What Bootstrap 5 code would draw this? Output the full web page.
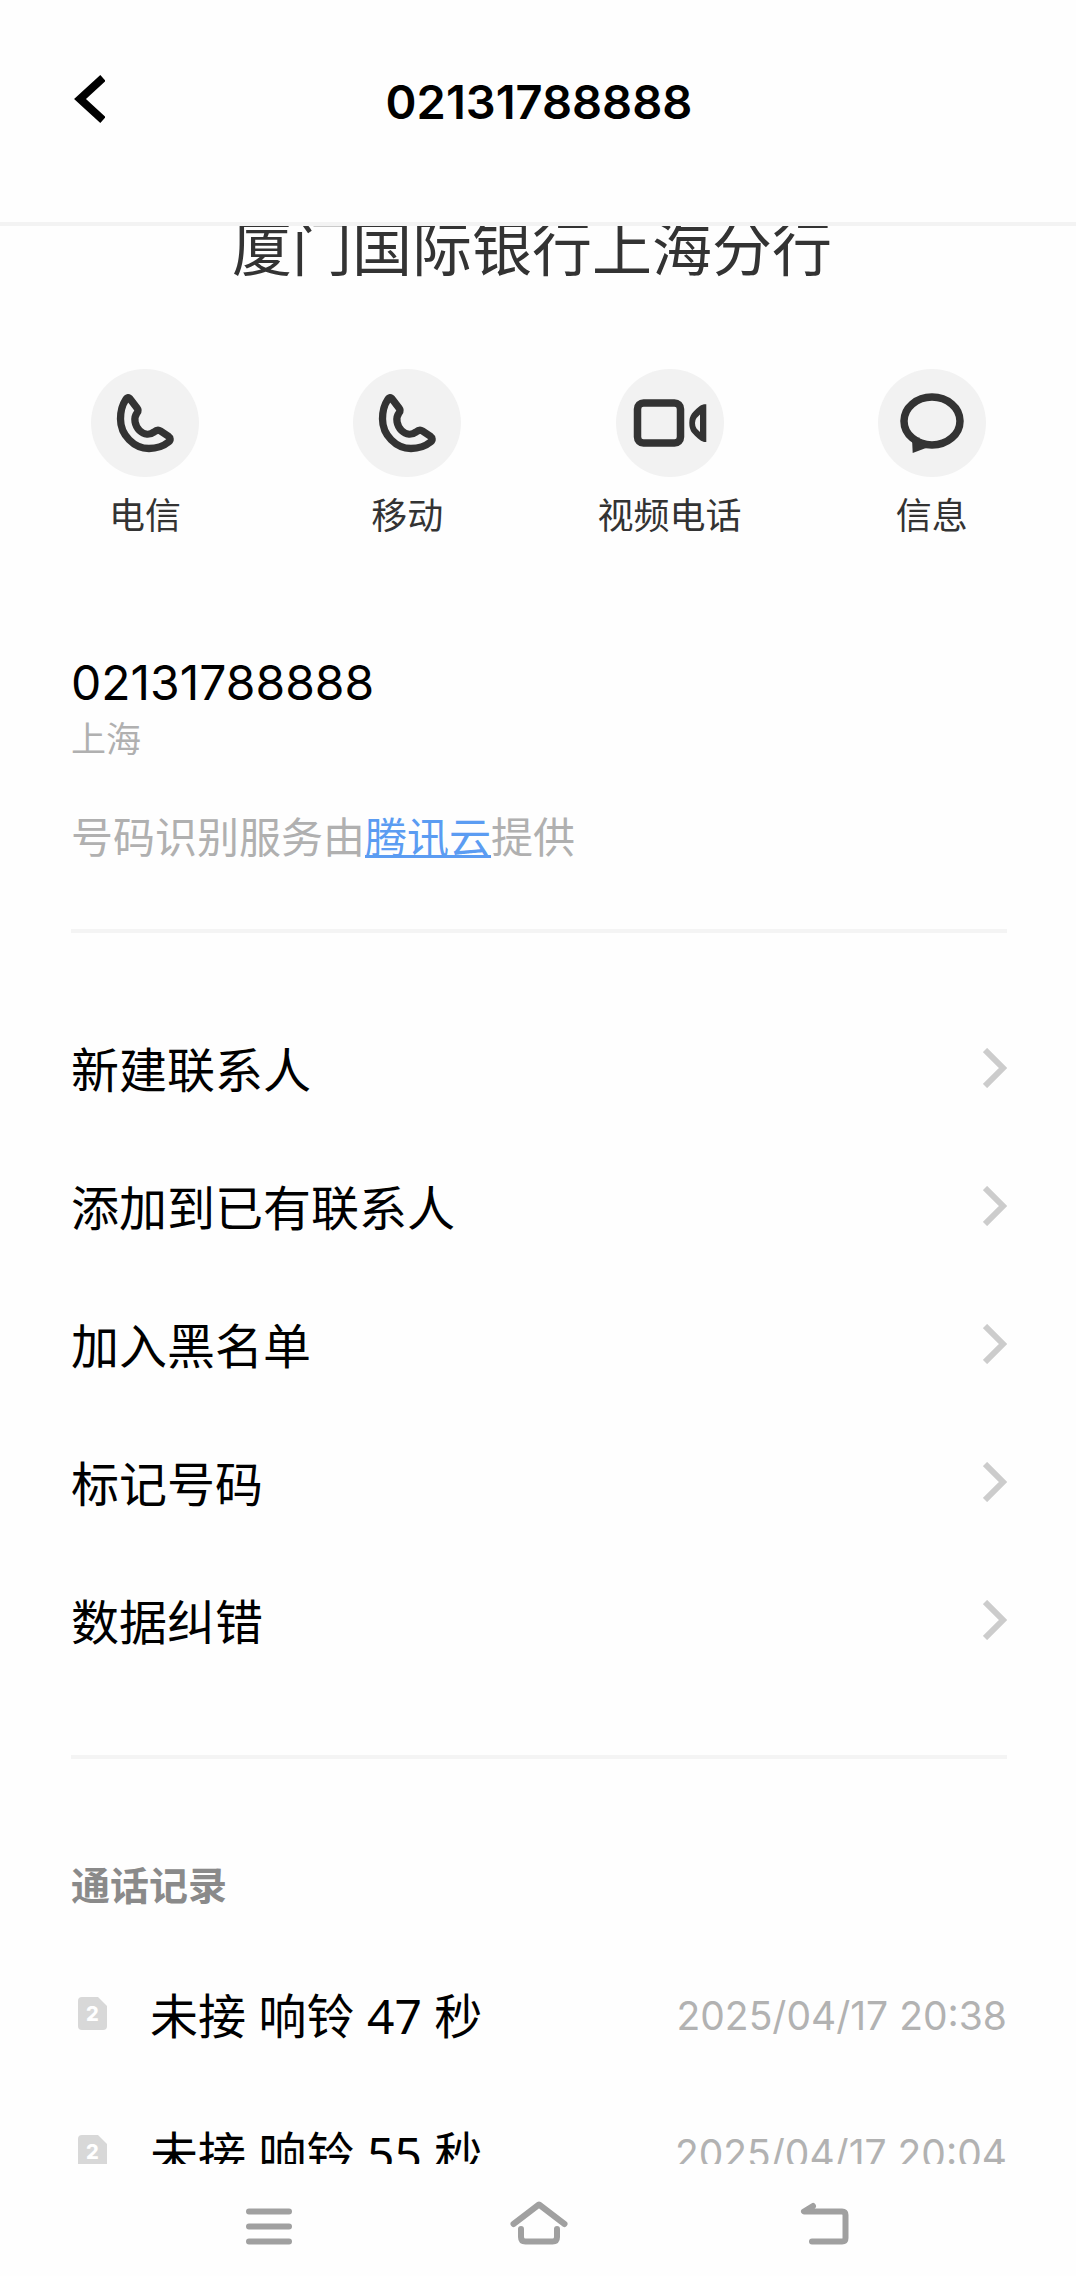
<!DOCTYPE html>
<html lang="zh-CN">
<head>
<meta charset="utf-8">
<meta name="viewport" content="width=device-width, initial-scale=1">
<title>02131788888</title>
<link href="https://cdn.jsdelivr.net/npm/bootstrap@5.3.0/dist/css/bootstrap.min.css" rel="stylesheet">
<style>
body{background:#fefefe;color:#000;font-family:Inter,"Noto Sans CJK SC",sans-serif}
button{background:none;border:0;padding:0;color:inherit}
svg{display:block}
.topbar{height:226px;padding-bottom:18px;border-bottom:4px solid #f3f3f3}
.topbar h1{font-size:47px;line-height:56px;font-weight:600}
.side{width:71px}
.gutter{padding-left:71px;padding-right:69px}
.scroller{min-height:0}
.owner{font-size:60px;line-height:60px;color:#333;margin-top:-7px;padding-right:12px;font-weight:400}
.actions{margin-top:90px;padding:0 13px 0 14px}
.action{font-size:36px;line-height:40px;color:#333;gap:19px}
.disc{width:108px;height:108px;background:#f2f2f2}
.phone{margin-top:119px;font-size:48px;line-height:56px}
.place{margin-top:8px;font-size:35px;line-height:40px;color:#b0b0b0}
.service{margin-top:54px;font-size:42px;line-height:50px;color:#b0b0b0}
.service a{color:#5b9cf2;text-decoration-thickness:3px;text-underline-offset:2px}
.rule{height:4px;background:#f4f4f4}
.rule-a{margin-top:66px}
.menu{padding:66px 0}
.line{height:138px;padding-top:5px;font-size:48px;line-height:60px}
.line svg{margin-bottom:5px}
.heading{margin-top:103px;font-size:39px;line-height:48px;font-weight:700;color:#8a8a8a}
.calls{margin-top:34px}
.calls span{font-family:"Noto Sans","Noto Sans CJK SC",sans-serif}
.sim{margin-left:7px;margin-right:43px}
.when{font-size:39px;color:#b2b2b2}
.sysbar{height:112px;padding:4px 227px 0 246px}
</style>
</head>
<body>
<svg class="d-none" aria-hidden="true">
  <symbol id="i-call" viewBox="0 0 108 108"><path d="M34.5 31Q37 26.500 39.500 30.500L46 39Q48 41.500 46 44C42 49 44 57 48.500 61.500C53 66 59 66 63 63Q66.500 60 69.500 62L77 67Q81 70 77.500 73C72 77.500 65 79.500 58 79.500C43 79.500 29.500 66 29.500 50C29.500 42 31.500 35.500 34.500 31Z" fill="none" stroke="#333" stroke-width="7.300" stroke-linejoin="round"/></symbol>
  <symbol id="i-next" viewBox="0 0 24 40"><path d="M2 2L20 20L2 38" fill="none" stroke="#ccc" stroke-width="6"/></symbol>
  <symbol id="i-sim" viewBox="0 0 29 33"><path d="M4 0H20L29 9V29Q29 33 25 33H4Q0 33 0 29V4Q0 0 4 0Z" fill="#d8d8d8"/><text x="14.500" y="24" text-anchor="middle" font-family="Inter" font-size="20" font-weight="800" fill="#fff">2</text></symbol>
</svg>
<div class="vh-100 d-flex flex-column">
  <header class="topbar flex-shrink-0 d-flex align-items-center gutter">
    <div class="side d-flex"><button aria-label="返回"><svg width="34" height="54" viewBox="-1 0 34 54"><path d="M31 3L8 24L31 45" fill="none" stroke="#000" stroke-width="8"/></svg></button></div>
    <h1 class="m-0 flex-grow-1 text-center">02131788888</h1>
    <div class="side"></div>
  </header>

  <main class="scroller flex-grow-1 overflow-hidden">
    <h2 class="owner mb-0 text-center">厦门国际银行上海分行</h2>

    <div class="actions row g-0">
      <div class="col-3"><button class="action w-100 d-flex flex-column align-items-center"><span class="disc rounded-circle"><svg width="108" height="108"><use href="#i-call"/></svg></span>电信</button></div>
      <div class="col-3"><button class="action w-100 d-flex flex-column align-items-center"><span class="disc rounded-circle"><svg width="108" height="108"><use href="#i-call"/></svg></span>移动</button></div>
      <div class="col-3"><button class="action w-100 d-flex flex-column align-items-center"><span class="disc rounded-circle"><svg width="108" height="108" viewBox="0 0 108 108"><rect x="21.500" y="34" width="43" height="40" rx="6" fill="none" stroke="#333" stroke-width="7.500"/><path fill="#333" fill-rule="evenodd" d="M90.300 35.300H88C84 36 80 40 76 44.500Q73.300 48 73.300 54Q73.300 60 76 63.500C80 68 84 72 88 73H90.300ZM84 45.500L80.500 49Q79 51 79 54Q79 57.500 80.500 59.500L84 63Z"/></svg></span>视频电话</button></div>
      <div class="col-3"><button class="action w-100 d-flex flex-column align-items-center"><span class="disc rounded-circle"><svg width="108" height="108" viewBox="0 0 108 108"><ellipse cx="54" cy="52" rx="28" ry="24" fill="none" stroke="#333" stroke-width="7.500"/><path fill="#333" d="M34 69L34.700 84L48 79L50 72L41.700 73.500L41.500 68.500Z"/></svg></span>信息</button></div>
    </div>

    <div class="gutter">
      <div class="phone">02131788888</div>
      <div class="place">上海</div>
      <p class="service mb-0">号码识别服务由<a href="#">腾讯云</a>提供</p>
      <div class="rule rule-a"></div>

      <nav class="menu" aria-label="联系人操作">
        <a href="#" class="line d-flex align-items-center justify-content-between text-black text-decoration-none">新建联系人<svg width="24" height="40"><use href="#i-next"/></svg></a>
        <a href="#" class="line d-flex align-items-center justify-content-between text-black text-decoration-none">添加到已有联系人<svg width="24" height="40"><use href="#i-next"/></svg></a>
        <a href="#" class="line d-flex align-items-center justify-content-between text-black text-decoration-none">加入黑名单<svg width="24" height="40"><use href="#i-next"/></svg></a>
        <a href="#" class="line d-flex align-items-center justify-content-between text-black text-decoration-none">标记号码<svg width="24" height="40"><use href="#i-next"/></svg></a>
        <a href="#" class="line d-flex align-items-center justify-content-between text-black text-decoration-none">数据纠错<svg width="24" height="40"><use href="#i-next"/></svg></a>
      </nav>
      <div class="rule"></div>

      <h3 class="heading mb-0">通话记录</h3>
      <ul class="calls list-unstyled mb-0">
        <li class="line d-flex align-items-center"><svg class="sim" width="29" height="33"><use href="#i-sim"/></svg><span>未接 响铃 47 秒</span><time class="when ms-auto">2025/04/17 20:38</time></li>
        <li class="line d-flex align-items-center"><svg class="sim" width="29" height="33"><use href="#i-sim"/></svg><span>未接 响铃 55 秒</span><time class="when ms-auto">2025/04/17 20:04</time></li>
      </ul>
    </div>
  </main>

  <footer class="sysbar flex-shrink-0 d-flex align-items-center justify-content-between">
    <button aria-label="最近任务"><svg width="46" height="48" viewBox="0 0 46 48" fill="none" stroke="#a0a0a0" stroke-width="6" stroke-linecap="round"><path d="M3 13.500H43M3 28.500H43M3 43.500H43"/></svg></button>
    <button aria-label="主页"><svg width="58" height="48" viewBox="0 0 58 48" fill="none" stroke="#a0a0a0" stroke-width="6" stroke-linecap="round" stroke-linejoin="round"><path d="M3.500 26L29 6.500L54.500 26M11 31V39Q11 43.500 15.500 43.500H42.500Q47 43.500 47 39V31"/></svg></button>
    <button aria-label="返回上一页"><svg width="63" height="48" viewBox="-14 0 63 48" fill="none" stroke="#a0a0a0" stroke-width="6" stroke-linecap="round" stroke-linejoin="round"><path d="M13 8L4 13.500H42Q45.500 13.500 45.500 17V40Q45.500 43.500 42 43.500H12"/></svg></button>
  </footer>
</div>
<script src="https://cdn.jsdelivr.net/npm/bootstrap@5.3.0/dist/js/bootstrap.bundle.min.js"></script>
</body>
</html>
